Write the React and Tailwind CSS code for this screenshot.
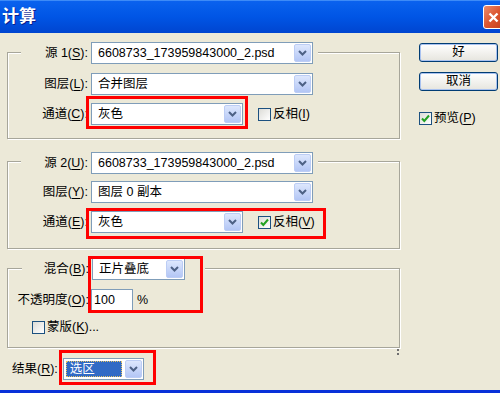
import React from 'react';

// underlined mnemonic letter
function U({ children }) {
  return <span className="underline underline-offset-[2px]">{children}</span>;
}

function Arrow() {
  return (
    <span className="flex w-[17px] items-center justify-center rounded-[2px] border border-[#BCCDF5] bg-gradient-to-b from-[#DDE7FD] to-[#B3C6F5]">
      <svg width="9" height="6" viewBox="0 0 9 6">
        <path d="M1 1l3.5 3.5L8 1" fill="none" stroke="#4D6185" strokeWidth="2" />
      </svg>
    </span>
  );
}

function Select({ value, className = '', picked }) {
  return (
    <div className={`flex h-[22px] border border-[#7F9DB9] bg-white p-[1px] ${className}`}>
      {picked ? (
        <div className="my-[1px] mr-[3px] ml-[1px] flex flex-1 items-center border border-dotted border-[#E5C365] bg-[#316AC5] pl-[3px] text-white">
          {value}
        </div>
      ) : (
        <div className="flex flex-1 items-center overflow-hidden whitespace-nowrap pl-[5px]">{value}</div>
      )}
      <Arrow />
    </div>
  );
}

function Check({ checked }) {
  return (
    <span className="flex h-[13px] w-[13px] shrink-0 items-center justify-center border border-[#1C5180] bg-gradient-to-br from-[#DCDCD7] to-white">
      {checked && (
        <svg width="9" height="9" viewBox="0 0 9 9">
          <path d="M1 4.5l2.3 2.5L8 1.5" fill="none" stroke="#21A121" strokeWidth="2" />
        </svg>
      )}
    </span>
  );
}

function Button({ children }) {
  return (
    <div className="flex h-[19px] w-[79px] items-center justify-center rounded-[3px] border border-[#003C74] bg-gradient-to-b from-white to-[#E6E5DE] shadow-[inset_0_0_0_1px_#A9C2F0]">
      {children}
    </div>
  );
}

function Row({ label, children, className = '' }) {
  return (
    <div className={`flex h-[22px] items-center ${className}`}>
      <div className="w-[67px] whitespace-nowrap text-right">{label}</div>
      <div className="ml-[3px] flex items-center">{children}</div>
    </div>
  );
}

const group = 'relative ml-[7px] w-[393px] border border-[#A7A69A] shadow-[1px_1px_0_#fff,inset_1px_1px_0_#fff]';
const red = 'pointer-events-none absolute border-[3px] border-[#FF0000]';
const file = '6608733_173959843000_2.psd';

export default function App() {
  return (
    <div className="h-[399px] w-[500px] overflow-hidden bg-white font-['Liberation_Sans','Noto_Sans_CJK_SC',sans-serif] text-[12.5px] text-black">
      {/* title bar */}
      <div className="flex h-[33px] items-start justify-between overflow-hidden border-t border-[#3D8BF7] bg-gradient-to-b from-[#0B62EE] via-[#0055E5] to-[#0045D0]">
        <div className="pl-[2px] pt-[5px] text-[17px] font-bold leading-[22px] text-white [text-shadow:1px_1px_0_#0A1F8C]">计算</div>
        <div className="-mr-[4px] mt-[4px] flex h-[24px] w-[21px] items-center justify-center rounded-[3px] border border-white bg-gradient-to-br from-[#E98B6B] via-[#DC5530] to-[#C5401C]">
          <svg width="11" height="11" viewBox="0 0 11 11">
            <path d="M1.5 1.5l8 8M9.5 1.5l-8 8" stroke="#fff" strokeWidth="2.4" />
          </svg>
        </div>
      </div>

      <div className="flex h-[357px] bg-[#ECE9D8]">
        <div className="w-[400px]">
          {/* source 1 */}
          <div className={`mt-[19px] pb-[13px] ${group}`}>
            <Row label={<>源 1(<U>S</U>):</>} className="-mt-[11px] ml-[13px] w-[297px] bg-[#ECE9D8]">
              <Select value={file} className="w-[222px]" />
            </Row>
            <Row label={<>图层(<U>L</U>):</>} className="ml-[13px] mt-[9px]">
              <Select value="合并图层" className="w-[222px]" />
            </Row>
            <Row label={<>通道(<U>C</U>):</>} className="ml-[13px] mt-[8px]">
              <div className="relative">
                <Select value="灰色" className="w-[152px]" />
                <span className={`${red} -left-[5px] -top-[7px] h-[33px] w-[162px]`} />
              </div>
              <span className="ml-[15px]"><Check /></span>
              <span className="ml-[2px]">反相(<U>I</U>)</span>
            </Row>
          </div>

          {/* source 2 */}
          <div className={`mt-[22px] pb-[15px] ${group}`}>
            <Row label={<>源 2(<U>U</U>):</>} className="-mt-[10px] ml-[13px] w-[297px] bg-[#ECE9D8]">
              <Select value={file} className="w-[222px]" />
            </Row>
            <Row label={<>图层(<U>Y</U>):</>} className="ml-[13px] mt-[7px]">
              <Select value="图层 0 副本" className="w-[222px]" />
            </Row>
            <Row label={<>通道(<U>E</U>):</>} className="ml-[13px] mt-[8px]">
              <div className="relative flex items-center">
                <Select value="灰色" className="w-[152px]" />
                <span className="ml-[15px]"><Check checked /></span>
                <span className="ml-[2px]">反相(<U>V</U>)</span>
                <span className={`${red} -left-[5px] -top-[3px] h-[31px] w-[240px]`} />
              </div>
            </Row>
          </div>

          {/* blending */}
          <div className={`mt-[19px] pb-[13px] ${group}`}>
            <Row label={<>混合(<U>B</U>):</>} className="-mt-[11px] ml-[14px] w-[183px] bg-[#ECE9D8]">
              <Select value="正片叠底" className="w-[93px]" />
            </Row>
            <div className="ml-[8px] mt-[9px] flex h-[22px] items-center">
              <div className="w-[73px] whitespace-nowrap text-right">不透明度(<U>O</U>):</div>
              <div className="ml-[2px] flex h-[22px] w-[42px] items-center border border-[#7F9DB9] bg-white pl-[2px]">100</div>
              <span className="ml-[4px]">%</span>
            </div>
            <div className="ml-[24px] mt-[10px] flex h-[13px] items-center">
              <Check />
              <span className="ml-[2px]">蒙版(<U>K</U>)...</span>
            </div>
            <span className={`${red} left-[80px] -top-[13px] h-[57px] w-[115px]`} />
            <span className="absolute -bottom-[8px] right-[0px] h-[6px] w-[2px] border-y-2 border-dotted border-[#6F6F6F]" />
          </div>

          {/* result */}
          <div className="ml-[12px] mt-[10px] flex h-[22px] items-center">
            <span>结果(<U>R</U>):</span>
            <div className="relative ml-[5px]">
              <Select value="选区" className="w-[81px]" picked />
              <span className={`${red} -left-[4px] -top-[8px] h-[35px] w-[97px]`} />
            </div>
          </div>
        </div>

        {/* buttons */}
        <div className="ml-[19px] pt-[10px]">
          <Button>好</Button>
          <div className="mt-[10px]">
            <Button>取消</Button>
          </div>
          <div className="mt-[18px] flex items-center">
            <Check checked />
            <span className="ml-[2px]">预览(<U>P</U>)</span>
          </div>
        </div>
      </div>
      <div className="h-[3px] bg-[#0831D9]" />
    </div>
  );
}
